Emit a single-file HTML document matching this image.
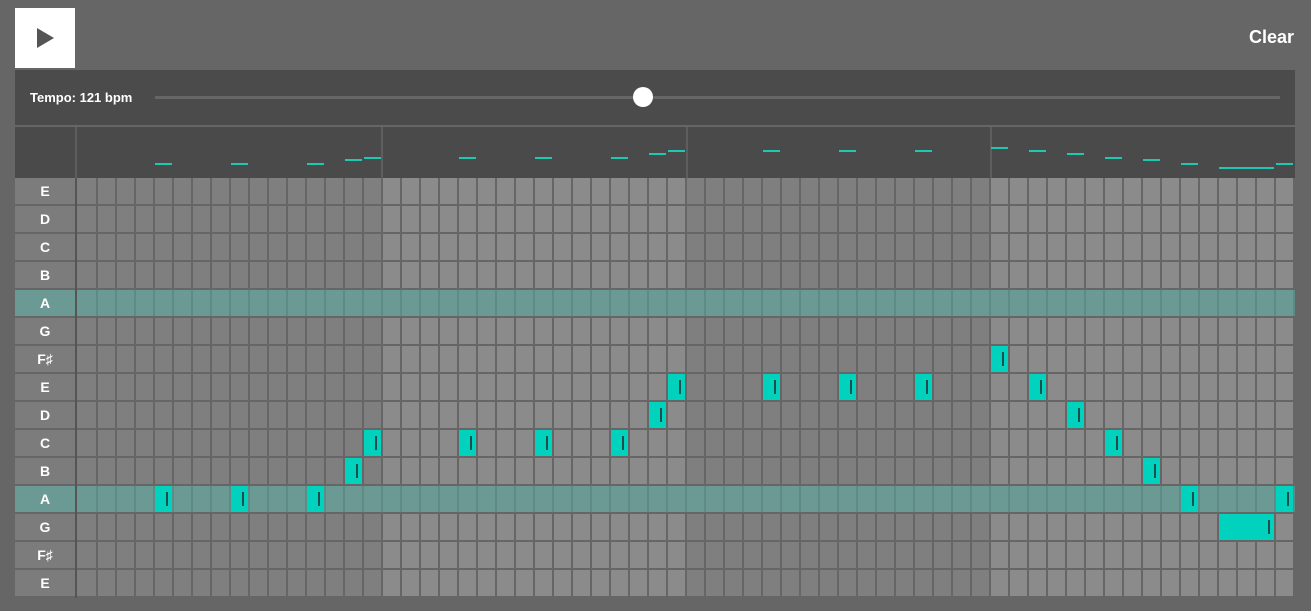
<!DOCTYPE html>
<html><head><meta charset="utf-8"><style>
*{margin:0;padding:0;box-sizing:border-box}
body{width:1311px;height:611px;background:#666;position:relative;overflow:hidden;font-family:"Liberation Sans","DejaVu Sans",sans-serif}
.abs{position:absolute}
#play{left:15px;top:8px;width:60px;height:60px;background:#fff}
#clear{right:17px;top:27px;color:#fff;font-size:18px;font-weight:bold}
#tempo{left:15px;top:70px;width:1280px;height:55px;background:#4b4b4b}
#tlabel{left:15px;top:20px;color:#fff;font-size:13px;font-weight:bold}
#track{left:140px;top:26px;width:1125px;height:3px;background:#666}
#thumb{left:618px;top:17px;width:20px;height:20px;border-radius:50%;background:#fff}
#head{left:15px;top:127px;width:1280px;height:51px;background:#4a4a4a}
#grid{left:15px;top:178px;width:1280px;height:420px;background:#666}
.lab{position:absolute;left:0;width:60px;height:26px;background:#7c7c7c;color:#fff;font-weight:bold;font-size:14px;text-align:center;line-height:26px}
.c{position:absolute;height:26px}
.n{position:absolute;height:26px;background:#00d2bd}
.n::after{content:"";position:absolute;right:4px;top:6px;width:2px;height:14px;background:#1f4f4a}
.d{position:absolute;height:2px;background:#1ec9b3}
</style></head><body>
<div id="play" class="abs"><svg width="60" height="60"><polygon points="22,20 22,40 39,30" fill="#555"/></svg></div>
<div id="clear" class="abs">Clear</div>
<div id="tempo" class="abs"><div id="tlabel" class="abs">Tempo: 121 bpm</div><div id="track" class="abs"></div><div id="thumb" class="abs"></div></div>
<div id="head" class="abs">
<div class="abs" style="left:60px;top:0;width:2px;height:51px;background:#5e5e5e"></div>
<div class="abs" style="left:366px;top:0;width:2px;height:51px;background:#5e5e5e"></div>
<div class="abs" style="left:671px;top:0;width:2px;height:51px;background:#5e5e5e"></div>
<div class="abs" style="left:975px;top:0;width:2px;height:51px;background:#5e5e5e"></div>
</div>
<div id="grid" class="abs">
<div class="lab" style="top:0">E</div>
<div class="lab" style="top:28px">D</div>
<div class="lab" style="top:56px">C</div>
<div class="lab" style="top:84px">B</div>
<div class="lab" style="top:112px;background:#6b9a94">A</div>
<div class="lab" style="top:140px">G</div>
<div class="lab" style="top:168px">F♯</div>
<div class="lab" style="top:196px">E</div>
<div class="lab" style="top:224px">D</div>
<div class="lab" style="top:252px">C</div>
<div class="lab" style="top:280px">B</div>
<div class="lab" style="top:308px;background:#6b9a94">A</div>
<div class="lab" style="top:336px">G</div>
<div class="lab" style="top:364px">F♯</div>
<div class="lab" style="top:392px">E</div>
<div class="abs" style="left:60px;top:0;width:2px;height:420px;background:#555"></div>
</div>
<script>
var g=document.getElementById('grid'),h=document.getElementById('head'),s='';
var O=64;
for(var r=0;r<15;r++){var a=(r==4||r==11);
 if(a)s+='<div class="abs" style="left:62px;top:'+(r*28)+'px;width:1218px;height:26px;background:#5f8a85"></div>';
 for(var c=0;c<64;c++){var m=Math.floor(c/16);var col=a?'#6b9a94':((m%2==0)?'#7f7f7f':'#8b8b8b');
 var L=O+c*19,W=17;if(c==0){L=62;W=19;}
 s+='<div class="c" style="left:'+L+'px;width:'+W+'px;top:'+(r*28)+'px;background:'+col+'"></div>';}}
var notes=[[11,4,1],[11,8,1],[11,12,1],[11,58,1],[11,63,1],[10,14,1],[10,56,1],[9,15,1],[9,20,1],[9,24,1],[9,28,1],[9,54,1],[8,30,1],[8,52,1],[7,31,1],[7,36,1],[7,40,1],[7,44,1],[7,50,1],[6,48,1],[12,60,3]];
var dy={11:36,10:32,9:30,8:26,7:23,6:20,12:40};var hs='';
notes.forEach(function(n){var w=n[2]*19-2;
 s+='<div class="n" style="left:'+(O+n[1]*19)+'px;top:'+(n[0]*28)+'px;width:'+w+'px"></div>';
 hs+='<div class="d" style="left:'+(O+n[1]*19)+'px;top:'+dy[n[0]]+'px;width:'+(w)+'px"></div>';});
g.insertAdjacentHTML('beforeend',s);h.insertAdjacentHTML('beforeend',hs);
</script>
</body></html>
